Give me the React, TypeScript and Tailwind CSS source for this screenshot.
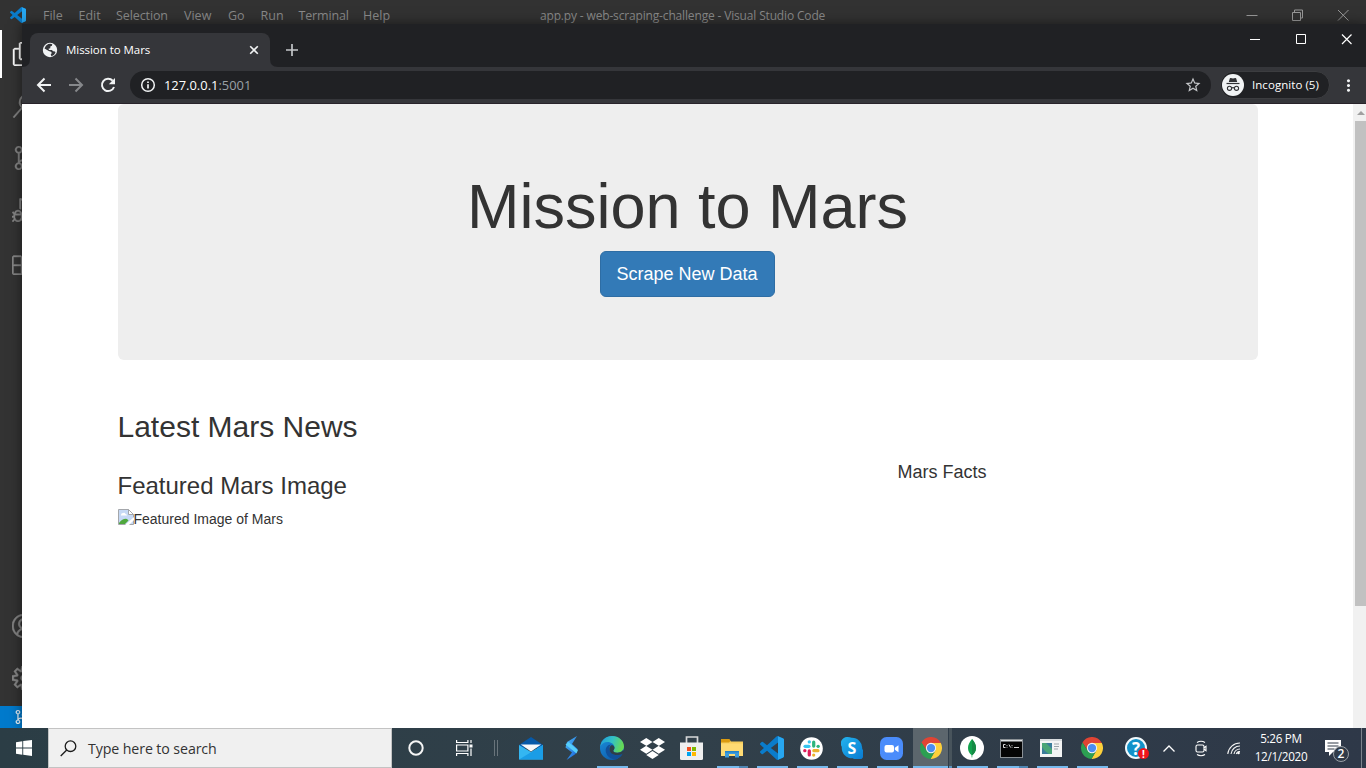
import React from "react";
import { VscFiles, VscSearch, VscSourceControl, VscDebugAlt, VscExtensions, VscAccount, VscSettingsGear } from "react-icons/vsc";
import { MdStarBorder, MdMoreVert } from "react-icons/md";
import { FaDropbox } from "react-icons/fa";

const VSCODE_PATH =
  "M23.15 2.587L18.21.21a1.494 1.494 0 0 0-1.705.29l-9.46 8.63-4.12-3.128a.999.999 0 0 0-1.276.057L.327 7.261A1 1 0 0 0 .326 8.74L3.899 12 .326 15.26a1 1 0 0 0 .001 1.479L1.65 17.94a.999.999 0 0 0 1.276.057l4.12-3.128 9.46 8.63a1.492 1.492 0 0 0 1.704.29l4.942-2.377A1.5 1.5 0 0 0 24 20.06V3.939a1.5 1.5 0 0 0-.85-1.352zm-5.146 14.861L10.826 12l7.178-5.448v10.896z";

function VsCodeLogo({ size }: { size: number }) {
  return (
    <svg width={size} height={size} viewBox="0 0 24 24">
      <path d={VSCODE_PATH} fill="#0a7ccb" />
      <path d="M18 .2 23.2 2.6Q24 3 24 4v16q0 1-.8 1.4L18 23.8z" fill="#27a7f1" />
    </svg>
  );
}

function ChromeLogo() {
  return (
    <svg width="22" height="22" viewBox="0 0 24 24">
      <path d="M12 6.5H22.7L22.4 6A12 12 0 0 0 1.6 6l5.6 8.8z" fill="#e04434" />
      <path d="M16.8 14.7 11.4 24H12A12 12 0 0 0 22.7 6.5H12z" fill="#fdd03b" />
      <path d="M7.2 14.7 1.6 6A12 12 0 0 0 11.4 24l5.4-9.3z" fill="#2c9f52" />
      <circle cx="12" cy="12" r="5.6" fill="#f3f3f3" />
      <circle cx="12" cy="12" r="4.5" fill="#4b8df0" />
    </svg>
  );
}

function GlobeIcon() {
  return (
    <svg width="16" height="16" viewBox="0 0 16 16" className="-translate-x-px">
      <circle cx="8" cy="8" r="7.2" fill="#f1f3f4" />
      <path d="M6.300 2.100Q8.500 1.300 10.300 2.200L10 3.800 8.300 4.600V6.200L6.500 6.800 7 8h2.800l1.400 1.300 1.800.2.500 1.300q-1.200 2.600-4 3.400l-.8-1.700L9.800 11 9 9.800 6.800 9 2.500 6.500Q3.400 3.400 6.300 2.100z" fill="#35363a" />
      <path d="M1.600 6.300 5.500 9.600V11l1.700 1.200v2.200A6.600 6.600 0 0 1 1.600 6.300zM9.500 4.500 11 2.300a6.600 6.600 0 0 1 3.500 7L11.600 8.500 9.400 7z" fill="#f1f3f4" />
    </svg>
  );
}

function ArrowIcon({ forward }: { forward?: boolean }) {
  return (
    <svg width="20" height="20" viewBox="0 0 20 20" fill="none" strokeWidth="2" className={forward ? "-scale-x-100 stroke-[#86888b]" : "stroke-[#f1f3f4]"}>
      <path d="M17 10H4.200M10.500 3.500 4 10l6.500 6.500" />
    </svg>
  );
}

function ReloadIcon() {
  return (
    <svg width="20" height="20" viewBox="0 0 20 20">
      <path d="M14.700 5.600A6.200 6.200 0 1 0 16 12" fill="none" stroke="#f1f3f4" strokeWidth="2" />
      <path d="M17 3v6.200h-6.200z" fill="#f1f3f4" />
    </svg>
  );
}

function InfoIcon() {
  return (
    <svg width="16" height="16" viewBox="0 0 16 16">
      <circle cx="8" cy="8" r="6.300" fill="none" stroke="#f1f3f4" strokeWidth="1.500" />
      <path d="M8 7.200v4.300M8 4.500v1.600" stroke="#f1f3f4" strokeWidth="1.700" />
    </svg>
  );
}

function MailIcon() {
  return (
    <svg width="24" height="24" viewBox="0 0 24 24" className="-translate-x-px">
      <path d="M0 9 12 1 24 9v3H0z" fill="#0659a8" />
      <path d="M0 9 12 16 24 9v14.500H0z" fill="#34b6f1" />
      <path d="M24 9V23.500H0z" fill="#1a9de6" />
      <path d="M1.800 8.500h20.400L12 15.500z" fill="#f6f8fa" />
    </svg>
  );
}

function BoltIcon() {
  return (
    <svg width="24" height="24" viewBox="0 0 24 24">
      <defs>
        <linearGradient id="bolt" x1="0" y1="0" x2="1" y2="1">
          <stop offset="0" stopColor="#4fbcf5" />
          <stop offset="1" stopColor="#1660dc" />
        </linearGradient>
      </defs>
      <path d="M17 0 7 6 5.500 11.500 12 16.500 6.500 24 15.500 18 17.500 13 12 8z" fill="url(#bolt)" />
      <path d="m5.500 8.500 3-2.500L18 14l-1.500 3.500z" fill="#56cdf9" />
    </svg>
  );
}

function EdgeIcon() {
  return (
    <svg width="24" height="24" viewBox="0 0 24 24">
      <defs>
        <linearGradient id="edgeTop" x1="0" y1="0" x2="1" y2=".25">
          <stop offset="0" stopColor="#1d9bdf" />
          <stop offset=".55" stopColor="#34c2c4" />
          <stop offset="1" stopColor="#65d956" />
        </linearGradient>
        <linearGradient id="edgeLow" x1="0" y1="0" x2=".7" y2="1">
          <stop offset="0" stopColor="#1b8fdc" />
          <stop offset="1" stopColor="#0d5cab" />
        </linearGradient>
      </defs>
      <circle cx="12" cy="12" r="12" fill="url(#edgeLow)" />
      <path d="M.2 10.500C1.300 4 6.300 0 12 0c7 0 12 5 12 10.500 0 4.300-3.400 6.200-6.600 6.200-2.600 0-4.200-1-4.200-1.800 0-.7 1.300-1.300 1.300-3.200 0-3.300-3.200-5.600-7-5.600-3.300 0-6 1.900-7.300 4.400z" fill="url(#edgeTop)" />
      <path d="M22.700 17.300c-1.500 1-3.500 1.500-5.500 1.500-5 0-8-3-8-6.500 0-1.500.8-3 2.200-3.700C6.500 8.900 5 13 6 16.500c1.300 4.500 5 6.500 9.300 7 3.200-.9 5.900-3.300 7.400-6.200z" fill="#11509a" />
      <path d="M13.300 15c0 .8 1.700 1.700 4.100 1.700 2.500 0 4.600-1 5.700-2.700l1 1.500-1 2c-2 1.300-4.200 1.500-6 1.500-4.500 0-7.500-2.500-7.700-5.800-.1-2 1-3.700 2.600-4.200 1.600.5 2.500 1.700 2.500 2.800 0 1.800-1.200 2.200-1.200 3.200z" fill="#2f3e48" />
    </svg>
  );
}

function StoreIcon() {
  return (
    <svg width="24" height="24" viewBox="0 0 24 24">
      <path d="M6.500 7V1h11v6" fill="none" stroke="#d6d8d9" strokeWidth="1.700" />
      <path d="M0 6.500h23v16q0 1.500-1.500 1.500h-20Q0 24 0 22.500z" fill="#efefef" />
      <path d="M7 11h4v4H7z" fill="#f25022" />
      <path d="M12 11h4v4h-4z" fill="#7fba00" />
      <path d="M7 16h4v4H7z" fill="#00a4ef" />
      <path d="M12 16h4v4h-4z" fill="#ffb900" />
    </svg>
  );
}

function FolderIcon() {
  return (
    <svg width="22" height="19" viewBox="0 0 22 19">
      <path d="M0 1h8.500l1.500 1.500h12V17H0z" fill="#f7ce5c" />
      <path d="M0 0h8.500l1 2-1.500 1.500H0z" fill="#dc9b10" />
      <path d="M0 4.500h22V17H0z" fill="#ffdb73" />
      <path d="M4 18.500V12h14v6.500h-4V15H8v3.500z" fill="#3c9bdc" />
      <path d="M4 12h14v1.500H4z" fill="#2583c8" />
    </svg>
  );
}

function SlackIcon() {
  return (
    <svg width="23" height="23" viewBox="0 0 24 24" className="-translate-x-px">
      <circle cx="12" cy="12" r="11.800" fill="#fff" />
      <g strokeWidth="3.400" strokeLinecap="round">
        <path d="M5.300 9.700h4" stroke="#36c5f0" />
        <path d="M9.700 5v.1" stroke="#36c5f0" />
        <path d="M14.300 5.300v4.200" stroke="#2eb67d" />
        <path d="M18.900 9.700h.1" stroke="#2eb67d" />
        <path d="M14.500 14.300h4.200" stroke="#ecb22e" />
        <path d="M14.300 18.800v.1" stroke="#ecb22e" />
        <path d="M9.700 14.500v4.200" stroke="#e01e5a" />
        <path d="M5 14.300h.1" stroke="#e01e5a" />
      </g>
    </svg>
  );
}

function SkypeIcon() {
  return (
    <span className="relative flex h-[22px] w-[22px] items-center justify-center">
      <svg width="22" height="22" viewBox="0 0 22 22" className="absolute inset-0">
        <defs>
          <linearGradient id="sky" x1="0" y1="0" x2="1" y2="1">
            <stop offset="0" stopColor="#23b4ef" />
            <stop offset="1" stopColor="#0878d0" />
          </linearGradient>
        </defs>
        <path d="M6.500 0Q9 0 10.500.8A10.300 10.300 0 0 1 21.200 12 6.500 6.500 0 0 1 12 21.200 10.300 10.300 0 0 1 .8 10 6.500 6.500 0 0 1 6.500 0z" fill="url(#sky)" />
      </svg>
      <span className="relative font-['Open_Sans',sans-serif] text-[16px] leading-none font-bold text-white">S</span>
    </span>
  );
}

function ZoomIcon() {
  return (
    <svg width="23" height="23" viewBox="0 0 23 23" className="-translate-x-px">
      <rect width="23" height="23" rx="6.500" fill="#4a8cfb" />
      <rect x="4.500" y="8" width="9.500" height="7.500" rx="2" fill="#fff" />
      <path d="m14.800 10.700 3.700-2.500v7l-3.700-2.500z" fill="#fff" />
    </svg>
  );
}

function MongoIcon() {
  return (
    <svg width="24" height="24" viewBox="0 0 24 24">
      <circle cx="12" cy="12" r="12" fill="#fff" />
      <path d="M12 3C15 6.500 16 9 16 12s-1.500 5.500-3.600 7l-.2 2.500h-.5L11.500 19C9.400 17.500 8 15 8 12s1.200-5.500 4-9z" fill="#13a24e" />
      <path d="M12 3C15 6.500 16 9 16 12s-1.500 5.500-3.600 7H12z" fill="#168a45" />
    </svg>
  );
}

function ConsoleIcon() {
  return (
    <svg width="23" height="19" viewBox="0 0 23 19" className="-translate-x-px">
      <rect x=".5" y=".5" width="22" height="18" fill="#050505" stroke="#8b9196" />
      <path d="M1 1h21v1.500H1z" fill="#dfe2e4" />
      <path d="M5.500 5.500h-2v3h2M7 6v.8M7 7.800v.8M9 5.500l1.500 3M12 6v.8M12 7.800v.8M14 8.500h5" fill="none" stroke="#eee" strokeWidth=".9" />
    </svg>
  );
}

function WindowIcon() {
  return (
    <svg width="22" height="18" viewBox="0 0 22 18" className="-translate-x-px">
      <rect width="22" height="18" fill="#f3f4f4" />
      <path d="M0 0h22v2H0z" fill="#d8dcde" />
      <rect x="2" y="4" width="10" height="11" fill="#3b7c9a" />
      <path d="M2 4h4l6 6v5H9Q4 12 2 8z" fill="#4aa577" />
      <path d="M14 5h5M14 7.500h5M14 10h4" stroke="#9aa3a8" />
    </svg>
  );
}

function HelpIcon() {
  return (
    <span className="relative flex h-[22px] w-[22px] items-center justify-center rounded-full border-2 border-[#f2f9fc] bg-[#1292c9] font-['Open_Sans',sans-serif] text-[17px] leading-none font-bold text-white">
      ?
      <span className="absolute -right-[4px] -bottom-[2px] flex h-[11px] w-[11px] items-center justify-center rounded-full bg-[#f0141b] text-[10px] leading-none">!</span>
    </span>
  );
}

function IncognitoIcon() {
  return (
    <svg width="22" height="22" viewBox="0 0 22 22">
      <circle cx="11" cy="11" r="11" fill="#f1f3f4" />
      <path d="M7.800 4.500q.2-.6.9-.4l2.300.5 2.300-.5q.7-.2.9.4L15.200 8H6.800z" fill="#303134" />
      <path d="M4.500 9.500h13" stroke="#303134" strokeWidth="1.200" />
      <g fill="none" stroke="#303134" strokeWidth="1.100">
        <circle cx="7.500" cy="14.300" r="2.100" />
        <circle cx="14.500" cy="14.300" r="2.100" />
        <path d="M9.600 14q1.400-.8 2.800 0" />
      </g>
    </svg>
  );
}

function VsCodeWindow() {
  return (
    <div className="flex h-[728px] flex-col bg-[#333333]">
      <header className="flex h-[30px] shrink-0 items-center justify-between bg-[#323232] text-[13px] text-[#8a8a8a]">
        <div className="flex w-[540px] items-center pl-[10px]">
          <VsCodeLogo size={16} />
          <nav className="flex pt-[2px] pl-[17px] text-[12.5px] leading-[28px]">
            <span className="w-[35.500px]">File</span>
            <span className="w-[37.500px]">Edit</span>
            <span className="w-[68px] tracking-[-0.1px]">Selection</span>
            <span className="w-[44px]">View</span>
            <span className="w-[32.500px]">Go</span>
            <span className="w-[38px]">Run</span>
            <span className="w-[64.500px] tracking-[-0.15px]">Terminal</span>
            <span>Help</span>
          </nav>
        </div>
        <div className="pt-[2px] text-[12px] tracking-[-0.16px] whitespace-nowrap">app.py - web-scraping-challenge - Visual Studio Code</div>
        <svg width="138" height="30" viewBox="0 0 138 30" className="ml-auto" fill="none" stroke="#999">
          <path d="M18.500 15.500h11M64.500 12.500h8v8h-8zM66.500 12v-2h8v8h-2" />
          <path d="m110 10 10.500 10.500M120.500 10 110 20.500" />
        </svg>
      </header>
      <div className="flex min-h-0 flex-1">
        <aside className="flex w-[48px] flex-col text-[24px] text-[#858585]">
          <div className="flex h-[48px] items-center justify-center border-l-2 border-white pr-[2px] text-white"><VscFiles strokeWidth={0.4} /></div>
          <div className="flex h-[56px] items-center justify-center"><VscSearch strokeWidth={0.4} /></div>
          <div className="flex h-[48px] items-center justify-center"><VscSourceControl strokeWidth={0.4} /></div>
          <div className="flex h-[56px] items-center justify-center"><VscDebugAlt strokeWidth={0.4} /></div>
          <div className="flex h-[50px] items-center justify-center"><VscExtensions strokeWidth={0.4} /></div>
          <div className="mt-auto flex h-[52px] items-center justify-center"><VscAccount strokeWidth={0.4} /></div>
          <div className="flex h-[54px] items-center justify-center pb-[2px]"><VscSettingsGear strokeWidth={0.4} /></div>
        </aside>
      </div>
      <footer className="flex h-[22px] shrink-0 items-center bg-[#007acc] pl-[14px] text-[14px] text-white"><VscSourceControl strokeWidth={0.5} /></footer>
    </div>
  );
}

function BrokenImage() {
  return (
    <svg width="16" height="16" viewBox="0 0 16 16">
      <path d="M.5.500h10l5 5v10H.5z" fill="#c6d9f5" stroke="#a4a7ab" />
      <path d="M10.500.500v5h5z" fill="#fff" stroke="#a4a7ab" />
      <path d="M3 6q0-2 2-2 2-1 2.500 1Q9 5 9 6.500H3z" fill="#fff" />
      <path d="M1 15v-1q4-5 8-4l1.500 1.500L7 15z" fill="#4fa83d" />
      <path d="M16 8v3l-5 5H7z" fill="#fff" />
    </svg>
  );
}

function Page() {
  return (
    <div className="flex min-h-0 flex-1 bg-white">
      <main className="flex flex-1 flex-col pl-[96px] font-['Liberation_Sans',Arial,sans-serif] text-[#333]">
        <section className="flex h-[256px] w-[1140px] flex-col items-center rounded-[6px] bg-[#eee] pt-[68px] pr-px">
          <h1 className="text-[63px] leading-[69px]">Mission to Mars</h1>
          <button className="mt-[10px] mr-px h-[46px] w-[175px] rounded-[6px] border border-[#2e6da4] bg-[#337ab7] text-[18px] leading-[24px] text-white">Scrape New Data</button>
        </section>
        <div className="-ml-[0.5px]">
          <h2 className="mt-[50px] text-[30px] leading-[33px]">Latest Mars News</h2>
          <section className="flex pt-[19px]">
            <div className="w-[780px]">
              <h3 className="pt-[11px] text-[24px] leading-[26px]">Featured Mars Image</h3>
              <div className="mt-[10px] flex text-[14px] leading-[20px]">
                <BrokenImage />
                <span>Featured Image of Mars</span>
              </div>
            </div>
            <h4 className="text-[18px] leading-[20px]">Mars Facts</h4>
          </section>
        </div>
      </main>
      <div className="flex w-[13px] flex-col bg-[#f1f1f1] pl-[2px]">
        <div className="flex h-[17px] items-center pl-[2px]">
          <svg width="8" height="4" viewBox="0 0 8 4"><path d="m0 4 4-4 4 4z" fill="#a0a0a0" /></svg>
        </div>
        <div className="h-[485px] bg-[#c1c1c1]" />
      </div>
    </div>
  );
}

function ChromeWindow() {
  return (
    <div className="absolute top-[24px] left-[22px] flex h-[704px] w-[1344px] flex-col shadow-[0_0_12px_rgba(0,0,0,0.5)]">
      <div className="flex h-[43px] shrink-0 items-start bg-[#202124] pt-[9px]">
        <svg width="8" height="34" viewBox="0 0 8 34"><path d="M8 26v8H0q8 0 8-8" fill="#35363a" /></svg>
        <div className="flex h-[34px] w-[240px] items-center rounded-t-[8px] bg-[#35363a] pr-[11px] pl-[13px] text-white">
          <GlobeIcon />
          <span className="ml-[7px] text-[11.500px] tracking-[-0.05px]">Mission to Mars</span>
          <svg width="10" height="10" viewBox="0 0 10 10" className="ml-auto" stroke="#f1f3f4" strokeWidth="1.600"><path d="m1.200 1.200 7.600 7.600M8.800 1.200 1.200 8.800" /></svg>
        </div>
        <svg width="8" height="34" viewBox="0 0 8 34"><path d="M0 26v8h8q-8 0-8-8" fill="#35363a" /></svg>
        <svg width="12" height="12" viewBox="0 0 12 12" className="mt-[11px] ml-[8px]" stroke="#c4c6c9" strokeWidth="1.700"><path d="M6 0v12M0 6h12" /></svg>
        <svg width="116" height="14" viewBox="0 0 116 14" className="ml-auto" fill="none" stroke="#fff">
          <path d="M0 6.500h10M46.500 1.500h9v9h-9z" />
          <path d="m92 1.500 9.500 9.500M101.500 1.500 92 11" strokeWidth="1.200" />
        </svg>
      </div>
      <div className="flex h-[36px] shrink-0 items-center bg-[#35363a] text-[#f1f3f4]">
        <div className="flex w-[108px] items-center gap-[12px] pl-[12px]">
          <ArrowIcon />
          <ArrowIcon forward />
          <ReloadIcon />
        </div>
        <div className="flex h-[28px] w-[1081px] items-center rounded-full bg-[#202124] pr-[9px] pl-[10px]">
          <InfoIcon />
          <span className="ml-[8px] pt-px text-[12.900px] text-white">127.0.0.1<span className="text-[#9aa0a6]">:5001</span></span>
          <MdStarBorder size={18} className="ml-auto text-[#c4c6c9]" />
        </div>
        <div className="ml-[9px] flex h-[28px] w-[110px] items-center rounded-full border border-[#3c3d40] bg-[#202124] pl-px text-[11.500px] text-white">
          <IncognitoIcon />
          <span className="ml-[8px] tracking-[0.05px] whitespace-nowrap">Incognito (5)</span>
        </div>
        <MdMoreVert size={19} className="ml-[9px]" />
      </div>
      <div className="h-px shrink-0 bg-[#28232a]" />
      <Page />
    </div>
  );
}

type AppItem = { icon: React.ReactNode; state?: "open" | "multi" | "active" };

const apps: AppItem[] = [
  { icon: <MailIcon /> },
  { icon: <BoltIcon /> },
  { icon: <EdgeIcon />, state: "open" },
  { icon: <FaDropbox size={25} color="#fff" /> },
  { icon: <StoreIcon /> },
  { icon: <FolderIcon />, state: "multi" },
  { icon: <VsCodeLogo size={24} />, state: "open" },
  { icon: <SlackIcon />, state: "open" },
  { icon: <SkypeIcon />, state: "open" },
  { icon: <ZoomIcon />, state: "open" },
  { icon: <ChromeLogo />, state: "active" },
  { icon: <MongoIcon />, state: "open" },
  { icon: <ConsoleIcon />, state: "multi" },
  { icon: <WindowIcon />, state: "open" },
  { icon: <ChromeLogo />, state: "open" },
];

function TaskItem({ icon, state }: AppItem) {
  return (
    <div className="relative flex h-full w-[40px] items-center justify-center">
      {state === "active" && (
        <div className="absolute inset-y-0 left-px flex w-[39px]">
          <div className="w-[35px] bg-[#5c666d]" />
          <div className="ml-px w-[3px] bg-[#48545c]" />
        </div>
      )}
      <div className={state === "active" ? "relative pr-[2px]" : "relative"}>{icon}</div>
      {state === "active" && (
        <div className="absolute bottom-0 left-px flex h-[2px]">
          <div className="w-[35px] bg-[#76b9ed]" />
          <div className="ml-px w-[3px] bg-[#5b92bd]" />
        </div>
      )}
      {(state === "open" || state === "multi") && (
        <div className="absolute bottom-0 left-[5px] flex h-[2px] w-[31px] bg-[#76b9ed]">
          {state === "multi" && <div className="ml-auto w-[9px] bg-[#4f86b3]" />}
        </div>
      )}
    </div>
  );
}

function Taskbar() {
  return (
    <div className="flex h-[40px] items-center bg-linear-to-r from-[#2b3d45] via-[#31404a] to-[#2e3848] text-white">
      <div className="flex w-[48px] justify-center">
        <svg width="16" height="16" viewBox="0 0 16 16" fill="#fff"><path d="M0 2.200 6.300 1.200v6.300H0zM7.200 1.100 16 0v7.500H7.200zM0 8.400h6.300v6.300L0 13.800zM7.200 8.400H16V16l-8.800-1.200z" /></svg>
      </div>
      <div className="flex h-full w-[344px] items-center border border-[#c3c3c3] bg-[#f0f0f0] pl-[11px]">
        <svg width="17" height="17" viewBox="0 0 17 17" fill="none" stroke="#1c1c1c" strokeWidth="1.300"><circle cx="10.500" cy="6.200" r="5.300" /><path d="M6.700 10 .7 16" /></svg>
        <span className="ml-[11px] pt-[2px] text-[14.200px] tracking-[-0.1px] text-[#333]">Type here to search</span>
      </div>
      <div className="flex w-[48px] justify-center">
        <svg width="16" height="16" viewBox="0 0 16 16"><circle cx="8" cy="8" r="6.700" fill="none" stroke="#f5f5f5" strokeWidth="2" /></svg>
      </div>
      <div className="flex w-[48px] justify-center">
        <svg width="17" height="16" viewBox="0 0 17 16" fill="none" stroke="#fff" strokeWidth="1.200"><path d="M.6 0v2.500h11.300V0M.6 5h11.300v6H.6zM.6 16v-2.500h11.300V16M15 0v3M15 8.500V16" /><path d="M13.500 4.500h3v3h-3z" fill="#fff" stroke="none" /></svg>
      </div>
      <div className="flex w-[24px] gap-[2px] pl-[6px]">
        <div className="h-[16px] w-px bg-[#69747b]" />
        <div className="h-[16px] w-px bg-[#69747b]" />
      </div>
      <div className="flex h-full">
        {apps.map((app, i) => <TaskItem key={i} {...app} />)}
      </div>
      <div className="flex w-[48px] justify-center"><HelpIcon /></div>
      <div className="flex w-[18px] justify-center">
        <svg width="12" height="7" viewBox="0 0 12 7" fill="none" stroke="#fff" strokeWidth="1.300"><path d="M.5 6.500 6 1l5.500 5.500" /></svg>
      </div>
      <div className="flex w-[46px] justify-center">
        <svg width="14" height="17" viewBox="0 0 14 17" fill="none" stroke="#fff" strokeWidth="1.100"><path d="M3 2.500Q7 0 11 2.500M3 14.500Q7 17 11 14.500" /><rect x="2" y="5" width="8" height="7" rx="1.500" /><path d="M10 7.800 12 6.300v4.400l-2-1.500" /></svg>
      </div>
      <div className="flex w-[20px] justify-center">
        <svg width="14" height="14" viewBox="0 0 14 14" fill="none" stroke="#f4f4f4" strokeWidth="1.100"><path d="M.8 13A12.200 12.200 0 0 1 13 2M4 13a9 9 0 0 1 9-8M7 13a6 6 0 0 1 6-5" /><circle cx="11.500" cy="12" r="1.300" fill="#fff" stroke="none" /><path d="M9.300 13a3.400 3.400 0 0 1 3.700-2.500" /></svg>
      </div>
      <div className="w-[74px] pb-[2px] text-center text-[11.700px] leading-[18px] tracking-[-0.3px] whitespace-nowrap">
        <div>5:26 PM</div>
        <div>12/1/2020</div>
      </div>
      <div className="relative ml-[7px] h-[26px] w-[26px]">
        <svg width="17" height="16" viewBox="0 0 17 16" className="mt-[5px]"><path d="M0 0h16v12H8l-4 4v-4H0z" fill="#fff" /><path d="M2.500 3h11M2.500 6h11M2.500 9h7" stroke="#303b49" /></svg>
        <span className="absolute top-[11px] left-[8px] flex h-[16px] w-[16px] items-center justify-center rounded-full border border-[#9aa0a6] bg-[#303b49] text-[12px] leading-none font-semibold">2</span>
      </div>
      <div className="ml-auto h-full w-[5px] border-l border-[#7b838c]" />
    </div>
  );
}

export default function App() {
  return (
    <div className="relative flex h-[768px] w-[1366px] flex-col overflow-hidden bg-[#333] font-['Open_Sans','Noto_Sans',sans-serif]">
      <div className="relative h-[728px] overflow-hidden">
        <VsCodeWindow />
        <ChromeWindow />
      </div>
      <Taskbar />
    </div>
  );
}
